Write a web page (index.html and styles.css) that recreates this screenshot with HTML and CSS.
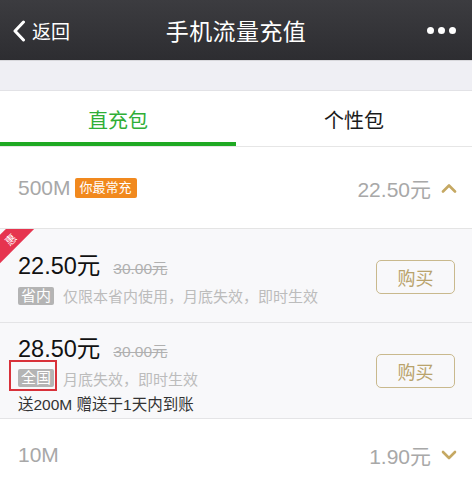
FILE: index.html
```html
<!DOCTYPE html>
<html lang="zh">
<head>
<meta charset="utf-8">
<title>手机流量充值</title>
<link rel="stylesheet" href="styles.css">
</head>
<body>
<div class="page">
  <header class="nav">
    <div class="back">
      <svg class="back-icon" width="14" height="22" viewBox="0 0 14 22"><path d="M11.5 2 L3 11 L11.5 20" fill="none" stroke="#fff" stroke-width="3" stroke-linecap="round" stroke-linejoin="round"/></svg>
      <span>返回</span>
    </div>
    <div class="title">手机流量充值</div>
    <div class="more"><i></i><i></i><i></i></div>
  </header>
  <div class="band"></div>
  <nav class="tabs">
    <div class="tab active">直充包</div>
    <div class="tab">个性包</div>
  </nav>
  <div class="group open">
    <div class="gname">500M<span class="badge">你最常充</span></div>
    <div class="gprice">22.50元
      <svg width="16" height="10" viewBox="0 0 16 10"><path d="M2 8.5 L8 2.5 L14 8.5" fill="none" stroke="#c5a862" stroke-width="2.6" stroke-linecap="round" stroke-linejoin="round"/></svg>
    </div>
  </div>
  <div class="item first">
    <div class="ribbon"><span>惠</span></div>
    <div class="info">
      <div class="prices"><span class="price">22.50元</span><span class="orig">30.00元</span></div>
      <div class="desc"><span class="tag">省内</span>仅限本省内使用，月底失效，即时生效</div>
    </div>
    <button class="buy">购买</button>
  </div>
  <div class="item second">
    <div class="info">
      <div class="prices"><span class="price">28.50元</span><span class="orig">30.00元</span></div>
      <div class="desc"><span class="tag marked">全国</span>月底失效，即时生效</div>
      <div class="extra">送200M 赠送于1天内到账</div>
    </div>
    <button class="buy">购买</button>
  </div>
  <div class="group last">
    <div class="gname">10M</div>
    <div class="gprice">1.90元
      <svg width="16" height="10" viewBox="0 0 16 10"><path d="M2 2 L8 8 L14 2" fill="none" stroke="#c5a862" stroke-width="2.6" stroke-linecap="round" stroke-linejoin="round"/></svg>
    </div>
  </div>
</div>
</body>
</html>
```
FILE: styles.css
```css
* { box-sizing: border-box; }
html, body { margin: 0; padding: 0; background: #fff; }
body {
  font-family: "Liberation Sans", "Noto Sans CJK SC", sans-serif;
  width: 472px;
  height: 490px;
  overflow: hidden;
}
.page { display: flex; flex-direction: column; }

.nav {
  height: 60px;
  background: linear-gradient(#3c3c40, #2d2d31);
  display: flex;
  align-items: center;
  justify-content: space-between;
  color: #fff;
  padding: 0 16px 0 12px;
  position: relative;
}
.back { display: flex; align-items: center; gap: 6px; font-size: 19px; width: 80px; }
.back-icon { display: block; margin-top: 1px; }
.title {
  font-size: 23px;
  letter-spacing: 0.4px;
  position: absolute;
  left: 0; right: 0;
  text-align: center;
  pointer-events: none;
}
.more { display: flex; gap: 4px; width: 80px; justify-content: flex-end; }
.more i { width: 7px; height: 7px; border-radius: 50%; background: #fff; display: block; }

.band {
  height: 31px;
  background: #efeff4;
  border-top: 1px solid #d8d8dc;
  border-bottom: 1px solid #e2e2e6;
}

.tabs {
  display: flex;
  height: 56px;
  border-bottom: 1px solid #e6e6e6;
}
.tab {
  flex: 1;
  display: flex;
  align-items: center;
  justify-content: center;
  font-size: 20px;
  color: #1a1a1a;
  padding-top: 2px;
}
.tab.active { color: #2fae36; box-shadow: inset 0 -4px 0 #1fa923; }

.group {
  display: flex;
  align-items: center;
  justify-content: space-between;
  padding: 0 15px 0 18px;
  color: #a8a8a8;
  font-size: 21px;
  background: #fff;
}
.group.open { height: 82px; border-bottom: 1px solid #e4e4e4; }
.group.last { height: 72px; }
.gname { display: flex; align-items: center; }
.badge {
  background: #f1891e;
  color: #fff;
  font-size: 13px;
  border-radius: 2px;
  padding: 0 5px;
  height: 20px;
  line-height: 20px;
  margin-left: 4px;
}
.gprice { display: flex; align-items: center; gap: 10px; }
.gprice svg { display: block; }

.item {
  position: relative;
  overflow: hidden;
  background: #f8f8fa;
  border-bottom: 1px solid #e4e4e6;
  display: flex;
  align-items: center;
  justify-content: space-between;
  padding: 0 17px 0 18px;
}
.item.first { height: 94px; padding-top: 2px; }
.item.second { height: 96px; padding-top: 2px; }
.ribbon {
  position: absolute;
  left: -30px;
  top: 0;
  width: 80px;
  height: 20px;
  background: #e6344f;
  transform: rotate(-45deg);
  display: flex;
  align-items: center;
  justify-content: center;
  color: #fff;
  font-size: 11px;
}
.info { display: flex; flex-direction: column; }
.prices { display: flex; align-items: baseline; }
.price { font-size: 23.5px; color: #111; }
.orig { font-size: 15.5px; color: #b0b0b0; text-decoration: line-through; margin-left: 13px; }
.desc {
  display: flex;
  align-items: center;
  font-size: 15px;
  color: #bcbcbc;
  margin-top: 4px;
}
.tag {
  background: #b4b4b4;
  color: #fff;
  font-size: 15px;
  height: 18px;
  line-height: 18px;
  padding: 0 3px;
  border-radius: 2px;
  margin-right: 9px;
  position: relative;
}
.tag.marked::after {
  content: "";
  position: absolute;
  left: -9px;
  right: -3px;
  top: -9px;
  bottom: -4px;
  border: 2px solid #d8313a;
}
.extra { font-size: 15.5px; color: #333; margin-top: 3px; }

.buy {
  width: 79px;
  height: 34px;
  border: 1.5px solid #c9b98d;
  border-radius: 5px;
  background: transparent;
  color: #b9a36c;
  font-size: 18px;
  font-family: "Noto Sans CJK SC", sans-serif;
  padding: 0;
}
.item.second .buy { margin-bottom: 2px; }
```
